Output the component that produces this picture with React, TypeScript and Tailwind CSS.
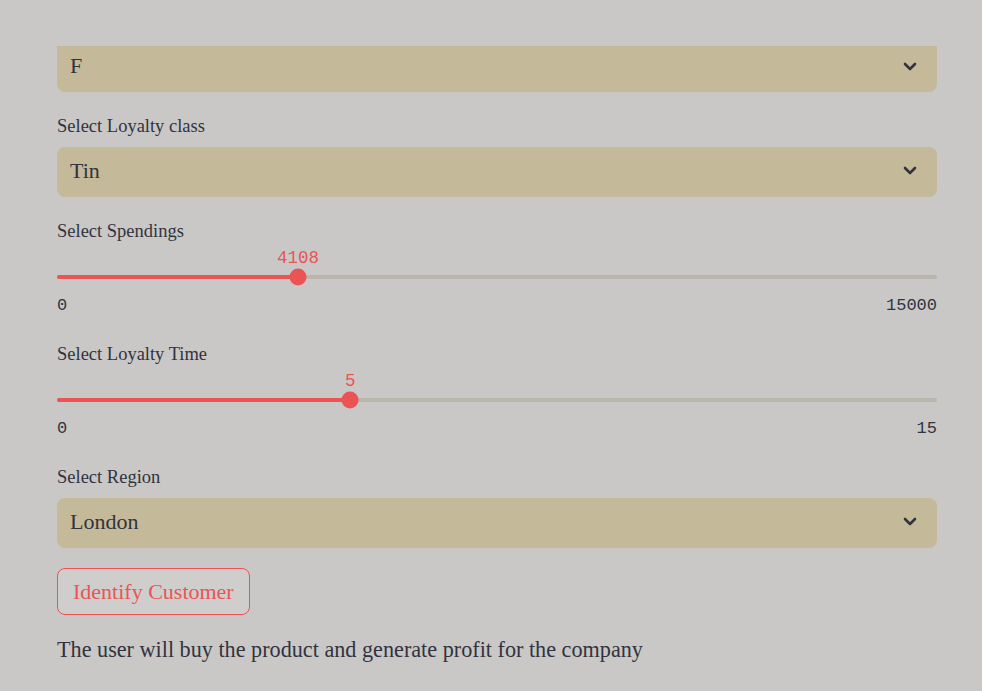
import React from "react";

const serif = { fontFamily: '"Liberation Serif", "DejaVu Serif", serif' };
const mono = { fontFamily: '"Liberation Mono", "DejaVu Sans Mono", monospace' };

function Chevron() {
  return (
    <svg width="14" height="9" viewBox="0 0 14 9" fill="none">
      <path d="M2 2 L7 7 L12 2" stroke="#31333f" strokeWidth="2.6" strokeLinecap="round" strokeLinejoin="round" />
    </svg>
  );
}

function Select({ value, clipped }: { value: string; clipped?: boolean }) {
  return (
    <div
      className={
        "flex items-center justify-between bg-[#c4b998] pl-[13px] pr-[20px] text-[22px] text-[#31333f] " +
        (clipped ? "h-[46px] rounded-b-lg pb-[6px]" : "h-[50px] rounded-lg pb-[3px]")
      }
    >
      <span className="leading-[26px]">{value}</span>
      <Chevron />
    </div>
  );
}

function Label({ text, mt }: { text: string; mt: string }) {
  return <div className={"h-[20px] text-[18.5px] leading-[20px] text-[#31333f] " + mt}>{text}</div>;
}

function Slider({ value, min, max }: { value: number; min: number; max: number }) {
  const pct = ((value - min) / (max - min)) * 100;
  return (
    <div className="mt-[7px]">
      <div className="relative h-[20px]" style={mono}>
        <span
          className="absolute top-0 -translate-x-1/2 text-[17.5px] leading-[20px] text-[#ea5455]"
          style={{ left: `${pct}%` }}
        >
          {value}
        </span>
      </div>
      <div className="relative flex h-[18px] items-center">
        <div className="h-[4px] w-full rounded-full bg-[#bab6ae]">
          <div className="h-full rounded-full bg-[#ea5455]" style={{ width: `${pct}%` }} />
        </div>
        <div
          className="absolute top-1/2 h-[17px] w-[17px] -translate-x-1/2 -translate-y-1/2 rounded-full bg-[#ea5455]"
          style={{ left: `${pct}%` }}
        />
      </div>
      <div
        className="mt-[10px] flex h-[20px] justify-between text-[17px] leading-[20px] text-[#31333f]"
        style={mono}
      >
        <span>{min}</span>
        <span>{max}</span>
      </div>
    </div>
  );
}

export default function App() {
  return (
    <div className="h-[691px] w-[982px] overflow-hidden bg-[#c9c8c6]" style={serif}>
      <div className="px-[57px] pt-[46px] box-content" style={{ width: 880 }}>
        <Select value="F" clipped />
        <Label text="Select Loyalty class" mt="mt-[24px]" />
        <div className="mt-[11px]">
          <Select value="Tin" />
        </div>
        <Label text="Select Spendings" mt="mt-[24px]" />
        <Slider value={4108} min={0} max={15000} />
        <Label text="Select Loyalty Time" mt="mt-[28px]" />
        <Slider value={5} min={0} max={15} />
        <Label text="Select Region" mt="mt-[28px]" />
        <div className="mt-[11px]">
          <Select value="London" />
        </div>
        <button className="mt-[20px] block h-[47px] rounded-lg border border-[#ea5455] bg-[#cfcecc] px-[15px] text-[22px] leading-[26px] text-[#ea5455]">
          Identify Customer
        </button>
        <div className="mt-[21px] h-[28px] text-[22.2px] leading-[28px] text-[#31333f]">
          The user will buy the product and generate profit for the company
        </div>
      </div>
    </div>
  );
}
